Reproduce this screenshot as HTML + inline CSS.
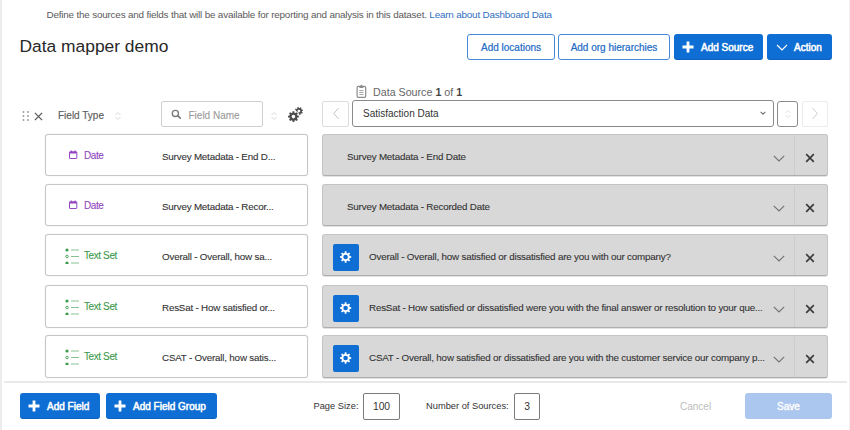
<!DOCTYPE html>
<html><head><meta charset="utf-8">
<style>
*{box-sizing:border-box;margin:0;padding:0}
html,body{width:850px;height:430px;overflow:hidden;background:#fff}
body{position:relative;font-family:"Liberation Sans",sans-serif;color:#333}
.a{position:absolute;white-space:nowrap;line-height:1}
.strip{position:absolute;top:0;bottom:0;width:2px;background:#ececec}
.btn{position:absolute;border-radius:3px}
.obtn{border:1px solid #4688d6;color:#2069c4;background:#fff;-webkit-text-stroke:0.2px #2069c4}
.sbtn{background:#0f6ed3;color:#fff;box-shadow:inset 0 -1px 0 rgba(0,40,110,0.18)}
.fcard{position:absolute;left:45px;width:263px;height:41px;border:1px solid #c6c6c6;border-radius:3px;background:#fff;box-shadow:0 0 1px #d8d8d8}
.gcard{position:absolute;left:322px;width:506px;height:41px;border:1px solid #c4c4c4;border-bottom-color:#adadad;border-radius:3px;background:#d8d8d8;box-shadow:0 1px 0 #e2e2e2}
.div{position:absolute;left:471px;top:0;bottom:0;width:1px;background:#cccccc}
.in{position:absolute;left:0;top:1px;right:0;bottom:0}
.t9{font-size:9.8px;letter-spacing:-0.19px;-webkit-text-stroke:0.1px currentColor}
</style></head><body>
<div class="strip" style="left:0"></div>
<div class="strip" style="right:0;width:1.5px;background:#f2f2f2"></div>

<!-- subtitle -->
<div class="a" style="left:46.5px;top:10px;font-size:9.9px;letter-spacing:-0.19px;color:#5a5a5a">Define the sources and fields that will be available for reporting and analysis in this dataset. <span style="color:#2f6fbf">Learn about Dashboard Data</span></div>
<!-- title -->
<div class="a" style="left:19.5px;top:38px;font-size:17.4px;color:#282828">Data mapper demo</div>

<!-- top buttons -->
<div class="btn obtn" style="left:467px;top:34px;width:88px;height:26px"><div class="a" style="left:0;right:0;top:8px;text-align:center;font-size:10px">Add locations</div></div>
<div class="btn obtn" style="left:558px;top:34px;width:112px;height:26px"><div class="a" style="left:0;right:0;top:8px;text-align:center;font-size:10px">Add org hierarchies</div></div>
<div class="btn sbtn" style="left:674px;top:34px;width:89px;height:26px">
  <svg class="a" style="left:8px;top:7px" width="12" height="12" viewBox="0 0 12 12"><path d="M6 0.5V11.5M0.5 6H11.5" stroke="#fff" stroke-width="2.8"/></svg>
  <div class="a" style="left:27px;top:9px;font-size:10px;-webkit-text-stroke:0.5px #fff">Add Source</div>
</div>
<div class="btn sbtn" style="left:767px;top:34px;width:65px;height:26px">
  <svg class="a" style="left:9px;top:10px" width="12" height="7" viewBox="0 0 12 7"><path d="M1 1L6 6L11 1" stroke="#fff" stroke-width="1.2" fill="none"/></svg>
  <div class="a" style="left:27px;top:9px;font-size:10px;-webkit-text-stroke:0.5px #fff">Action</div>
</div>

<!-- data source label -->
<svg class="a" style="left:356px;top:84px" width="11" height="14" viewBox="0 0 11 14"><rect x="1.1" y="2.4" width="8.6" height="11" rx="1.3" fill="none" stroke="#8c8c8c" stroke-width="1.2"/><circle cx="5.4" cy="1.7" r="1" fill="#8c8c8c"/><path d="M3.2 2H7.6V3.2Q7.6 4 6.8 4H4Q3.2 4 3.2 3.2Z" fill="#8c8c8c"/><path d="M3.3 6.6H7.5M3.3 8.5H7.5M3.3 10.5H7.5" stroke="#9a9a9a" stroke-width="0.9"/></svg>
<div class="a" style="left:373px;top:87px;font-size:10.7px;color:#666">Data Source <b style="color:#444">1</b> of <b style="color:#444">1</b></div>

<!-- header row -->
<svg class="a" style="left:21px;top:110px" width="9" height="12" viewBox="0 0 9 12"><g fill="#999"><circle cx="2.5" cy="2" r="0.9"/><circle cx="2.5" cy="6" r="0.9"/><circle cx="2.5" cy="10" r="0.9"/><circle cx="7" cy="2" r="0.9"/><circle cx="7" cy="6" r="0.9"/><circle cx="7" cy="10" r="0.9"/></g></svg>
<svg class="a" style="left:34px;top:112px" width="9" height="9" viewBox="0 0 9 9"><path d="M0.9 0.9L8.1 8.1M8.1 0.9L0.9 8.1" stroke="#5a5a5a" stroke-width="1.3"/></svg>
<div class="a" style="left:58px;top:111px;font-size:10px;color:#5c5c5c;-webkit-text-stroke:0.15px #5c5c5c">Field Type</div>
<svg class="a" style="left:114px;top:111px" width="8" height="10" viewBox="0 0 8 10"><path d="M1.5 4L4 1.5L6.5 4M1.5 6L4 8.5L6.5 6" stroke="#d4d4d4" stroke-width="0.9" fill="none"/></svg>
<div class="a" style="left:161px;top:101px;width:102px;height:26px;border:1px solid #d0d0d0;border-radius:2px"></div>
<svg class="a" style="left:171px;top:109px" width="11" height="11" viewBox="0 0 11 11"><circle cx="4.4" cy="4.4" r="3.1" fill="none" stroke="#7a7a7a" stroke-width="1.35"/><path d="M6.7 6.7L9.8 9.6" stroke="#7a7a7a" stroke-width="1.7"/></svg>
<div class="a" style="left:188.5px;top:111px;font-size:10px;color:#9a9a9a;-webkit-text-stroke:0.1px #9a9a9a">Field Name</div>
<svg class="a" style="left:270px;top:111px" width="8" height="10" viewBox="0 0 8 10"><path d="M1.5 4L4 1.5L6.5 4M1.5 6L4 8.5L6.5 6" stroke="#d4d4d4" stroke-width="0.9" fill="none"/></svg>
<svg class="a" style="left:287px;top:106px" width="17" height="17" viewBox="0 0 17 17"><defs><mask id="gm"><rect width="17" height="17" fill="#fff"/><circle cx="6.45" cy="10.6" r="6.2" fill="#000"/></mask></defs><path fill="#4d4d4d" fill-rule="evenodd" d="M5.43 6.63 L5.55 5.17 L7.35 5.17 L7.47 6.63 L8.54 7.07 L9.65 6.13 L10.92 7.40 L9.98 8.51 L10.42 9.58 L11.88 9.70 L11.88 11.50 L10.42 11.62 L9.98 12.69 L10.92 13.80 L9.65 15.07 L8.54 14.13 L7.47 14.57 L7.35 16.03 L5.55 16.03 L5.43 14.57 L4.36 14.13 L3.25 15.07 L1.98 13.80 L2.92 12.69 L2.48 11.62 L1.02 11.50 L1.02 9.70 L2.48 9.58 L2.92 8.51 L1.98 7.40 L3.25 6.13 L4.36 7.07ZM8.25 10.60A1.8 1.8 0 1 0 4.65 10.60A1.8 1.8 0 1 0 8.25 10.60Z"/><path fill="#4d4d4d" fill-rule="evenodd" mask="url(#gm)" d="M14.62 3.61 L15.74 3.41 L16.08 4.74 L15.00 5.10 L14.88 5.97 L15.82 6.62 L15.11 7.81 L14.09 7.29 L13.39 7.82 L13.59 8.94 L12.26 9.28 L11.90 8.20 L11.03 8.08 L10.38 9.02 L9.19 8.31 L9.71 7.29 L9.18 6.59 L8.06 6.79 L7.72 5.46 L8.80 5.10 L8.92 4.23 L7.98 3.58 L8.69 2.39 L9.71 2.91 L10.41 2.38 L10.21 1.26 L11.54 0.92 L11.90 2.00 L12.77 2.12 L13.42 1.18 L14.61 1.89 L14.09 2.91ZM13.30 5.10A1.4 1.4 0 1 0 10.50 5.10A1.4 1.4 0 1 0 13.30 5.10Z"/></svg>

<!-- source selector -->
<div class="a" style="left:322px;top:101px;width:27px;height:26px;border:1px solid #dcdcdc;border-radius:2px"></div>
<svg class="a" style="left:332px;top:107px" width="8" height="13" viewBox="0 0 8 13"><path d="M6.5 1.2L1.8 6.5L6.5 11.8" stroke="#c4c4c4" stroke-width="1" fill="none"/></svg>
<div class="a" style="left:352px;top:100px;width:422px;height:27px;border:1px solid #8a8a8a;border-radius:3px"></div>
<div class="a" style="left:363px;top:109px;font-size:10px;color:#333">Satisfaction Data</div>
<svg class="a" style="left:758.5px;top:110px" width="8" height="6" viewBox="0 0 8 6"><path d="M1.6 1.8L4 4.2L6.4 1.8" stroke="#707070" stroke-width="1.05" fill="none"/></svg>
<div class="a" style="left:777px;top:101px;width:21px;height:26px;border:1px solid #8c8c8c;border-radius:3px"></div>
<svg class="a" style="left:784px;top:109px" width="8" height="10" viewBox="0 0 8 10"><path d="M1.5 4L4 1.5L6.5 4M1.5 6L4 8.5L6.5 6" stroke="#ddd" stroke-width="0.9" fill="none"/></svg>
<div class="a" style="left:802px;top:101px;width:26px;height:26px;border:1px solid #ececec;border-radius:2px"></div>
<svg class="a" style="left:811px;top:107px" width="8" height="13" viewBox="0 0 8 13"><path d="M1.5 1L6.5 6.5L1.5 12" stroke="#ccc" stroke-width="1" fill="none"/></svg>

<!-- rows -->
<div class="fcard" style="top:134px;height:42px;"><div class="in"><svg class="a" style="left:23px;top:14px" width="9" height="9" viewBox="0 0 9 9"><rect x="0.5" y="1.8" width="7.3" height="6.7" rx="0.5" fill="none" stroke="#9247c0" stroke-width="1"/><rect x="0.5" y="1.8" width="7.3" height="1.7" fill="#9247c0"/><path d="M2.3 0.4V2.2M6 0.4V2.2" stroke="#9247c0" stroke-width="1"/></svg><div class="a t9" style="left:38px;top:14.5px;font-size:10px;letter-spacing:-0.4px;color:#9247c0">Date</div><div class="a t9" style="left:116px;top:16px;color:#333">Survey Metadata - End D...</div></div></div>
<div class="gcard" style="top:134px;height:42px;"><div class="in"><div class="a t9" style="left:24px;top:16px;color:#333">Survey Metadata - End Date</div><svg class="a" style="left:450px;top:19px" width="12" height="7" viewBox="0 0 12 7"><path d="M0.8 0.8L6 6L11.2 0.8" stroke="#727272" stroke-width="1.15" fill="none"/></svg><div class="div"></div><svg class="a" style="left:482px;top:17px" width="10" height="10" viewBox="0 0 10 10"><path d="M1.2 1.2L8.8 8.8M8.8 1.2L1.2 8.8" stroke="#3a3a3a" stroke-width="1.65"/></svg></div></div>
<div class="fcard" style="top:184px;height:42px;"><div class="in"><svg class="a" style="left:23px;top:14px" width="9" height="9" viewBox="0 0 9 9"><rect x="0.5" y="1.8" width="7.3" height="6.7" rx="0.5" fill="none" stroke="#9247c0" stroke-width="1"/><rect x="0.5" y="1.8" width="7.3" height="1.7" fill="#9247c0"/><path d="M2.3 0.4V2.2M6 0.4V2.2" stroke="#9247c0" stroke-width="1"/></svg><div class="a t9" style="left:38px;top:14.5px;font-size:10px;letter-spacing:-0.4px;color:#9247c0">Date</div><div class="a t9" style="left:116px;top:16px;color:#333">Survey Metadata - Recor...</div></div></div>
<div class="gcard" style="top:184px;height:42px;"><div class="in"><div class="a t9" style="left:24px;top:16px;color:#333">Survey Metadata - Recorded Date</div><svg class="a" style="left:450px;top:19px" width="12" height="7" viewBox="0 0 12 7"><path d="M0.8 0.8L6 6L11.2 0.8" stroke="#727272" stroke-width="1.15" fill="none"/></svg><div class="div"></div><svg class="a" style="left:482px;top:17px" width="10" height="10" viewBox="0 0 10 10"><path d="M1.2 1.2L8.8 8.8M8.8 1.2L1.2 8.8" stroke="#3a3a3a" stroke-width="1.65"/></svg></div></div>
<div class="fcard" style="top:234px;height:42px;"><div class="in"><svg class="a" style="left:18px;top:12px" width="16" height="16" viewBox="0 0 16 16"><circle cx="3" cy="2" r="1.6" fill="#3c9a4c"/><circle cx="3" cy="8.5" r="1.25" fill="none" stroke="#3c9a4c" stroke-width="0.9"/><circle cx="3" cy="15" r="1.6" fill="#3c9a4c"/><path d="M7 2H15M7 8.5H15M7 15H15" stroke="#72b57f" stroke-width="0.85"/></svg><div class="a t9" style="left:38px;top:14.5px;font-size:10px;letter-spacing:-0.4px;color:#3c9a4c">Text Set</div><div class="a t9" style="left:116px;top:16px;color:#333">Overall - Overall, how sa...</div></div></div>
<div class="gcard" style="top:234px;height:42px;"><div class="in"><div class="a" style="left:10px;top:8px;width:26px;height:27px;background:#0f6ed3;border-radius:2px"><svg class="a" style="left:7px;top:7px" width="12" height="12" viewBox="0 0 12 12"><path fill="#fff" fill-rule="evenodd" d="M4.62 1.92 L4.80 0.36 L6.40 0.36 L6.58 1.92 L7.79 2.42 L9.02 1.44 L10.16 2.58 L9.18 3.81 L9.68 5.02 L11.24 5.20 L11.24 6.80 L9.68 6.98 L9.18 8.19 L10.16 9.42 L9.02 10.56 L7.79 9.58 L6.58 10.08 L6.40 11.64 L4.80 11.64 L4.62 10.08 L3.41 9.58 L2.18 10.56 L1.04 9.42 L2.02 8.19 L1.52 6.98 L-0.04 6.80 L-0.04 5.20 L1.52 5.02 L2.02 3.81 L1.04 2.58 L2.18 1.44 L3.41 2.42ZM7.90 6.00A2.3 2.3 0 1 0 3.30 6.00A2.3 2.3 0 1 0 7.90 6.00Z"/></svg></div><div class="a t9" style="left:46px;top:16px;color:#333">Overall - Overall, how satisfied or dissatisfied are you with our company?</div><svg class="a" style="left:450px;top:19px" width="12" height="7" viewBox="0 0 12 7"><path d="M0.8 0.8L6 6L11.2 0.8" stroke="#727272" stroke-width="1.15" fill="none"/></svg><div class="div"></div><svg class="a" style="left:482px;top:17px" width="10" height="10" viewBox="0 0 10 10"><path d="M1.2 1.2L8.8 8.8M8.8 1.2L1.2 8.8" stroke="#3a3a3a" stroke-width="1.65"/></svg></div></div>
<div class="fcard" style="top:285px;height:43px;"><div class="in"><svg class="a" style="left:18px;top:12px" width="16" height="16" viewBox="0 0 16 16"><circle cx="3" cy="2" r="1.6" fill="#3c9a4c"/><circle cx="3" cy="8.5" r="1.25" fill="none" stroke="#3c9a4c" stroke-width="0.9"/><circle cx="3" cy="15" r="1.6" fill="#3c9a4c"/><path d="M7 2H15M7 8.5H15M7 15H15" stroke="#72b57f" stroke-width="0.85"/></svg><div class="a t9" style="left:38px;top:14.5px;font-size:10px;letter-spacing:-0.4px;color:#3c9a4c">Text Set</div><div class="a t9" style="left:116px;top:16px;color:#333">ResSat - How satisfied or...</div></div></div>
<div class="gcard" style="top:285px;height:43px;"><div class="in"><div class="a" style="left:10px;top:8px;width:26px;height:27px;background:#0f6ed3;border-radius:2px"><svg class="a" style="left:7px;top:7px" width="12" height="12" viewBox="0 0 12 12"><path fill="#fff" fill-rule="evenodd" d="M4.62 1.92 L4.80 0.36 L6.40 0.36 L6.58 1.92 L7.79 2.42 L9.02 1.44 L10.16 2.58 L9.18 3.81 L9.68 5.02 L11.24 5.20 L11.24 6.80 L9.68 6.98 L9.18 8.19 L10.16 9.42 L9.02 10.56 L7.79 9.58 L6.58 10.08 L6.40 11.64 L4.80 11.64 L4.62 10.08 L3.41 9.58 L2.18 10.56 L1.04 9.42 L2.02 8.19 L1.52 6.98 L-0.04 6.80 L-0.04 5.20 L1.52 5.02 L2.02 3.81 L1.04 2.58 L2.18 1.44 L3.41 2.42ZM7.90 6.00A2.3 2.3 0 1 0 3.30 6.00A2.3 2.3 0 1 0 7.90 6.00Z"/></svg></div><div class="a t9" style="left:46px;top:16px;color:#333">ResSat - How satisfied or dissatisfied were you with the final answer or resolution to your que...</div><svg class="a" style="left:450px;top:19px" width="12" height="7" viewBox="0 0 12 7"><path d="M0.8 0.8L6 6L11.2 0.8" stroke="#727272" stroke-width="1.15" fill="none"/></svg><div class="div"></div><svg class="a" style="left:482px;top:17px" width="10" height="10" viewBox="0 0 10 10"><path d="M1.2 1.2L8.8 8.8M8.8 1.2L1.2 8.8" stroke="#3a3a3a" stroke-width="1.65"/></svg></div></div>
<div class="fcard" style="top:335px;height:43px;"><div class="in"><svg class="a" style="left:18px;top:12px" width="16" height="16" viewBox="0 0 16 16"><circle cx="3" cy="2" r="1.6" fill="#3c9a4c"/><circle cx="3" cy="8.5" r="1.25" fill="none" stroke="#3c9a4c" stroke-width="0.9"/><circle cx="3" cy="15" r="1.6" fill="#3c9a4c"/><path d="M7 2H15M7 8.5H15M7 15H15" stroke="#72b57f" stroke-width="0.85"/></svg><div class="a t9" style="left:38px;top:14.5px;font-size:10px;letter-spacing:-0.4px;color:#3c9a4c">Text Set</div><div class="a t9" style="left:116px;top:16px;color:#333">CSAT - Overall, how satis...</div></div></div>
<div class="gcard" style="top:335px;height:43px;"><div class="in"><div class="a" style="left:10px;top:8px;width:26px;height:27px;background:#0f6ed3;border-radius:2px"><svg class="a" style="left:7px;top:7px" width="12" height="12" viewBox="0 0 12 12"><path fill="#fff" fill-rule="evenodd" d="M4.62 1.92 L4.80 0.36 L6.40 0.36 L6.58 1.92 L7.79 2.42 L9.02 1.44 L10.16 2.58 L9.18 3.81 L9.68 5.02 L11.24 5.20 L11.24 6.80 L9.68 6.98 L9.18 8.19 L10.16 9.42 L9.02 10.56 L7.79 9.58 L6.58 10.08 L6.40 11.64 L4.80 11.64 L4.62 10.08 L3.41 9.58 L2.18 10.56 L1.04 9.42 L2.02 8.19 L1.52 6.98 L-0.04 6.80 L-0.04 5.20 L1.52 5.02 L2.02 3.81 L1.04 2.58 L2.18 1.44 L3.41 2.42ZM7.90 6.00A2.3 2.3 0 1 0 3.30 6.00A2.3 2.3 0 1 0 7.90 6.00Z"/></svg></div><div class="a t9" style="left:46px;top:16px;color:#333">CSAT - Overall, how satisfied or dissatisfied are you with the customer service our company p...</div><svg class="a" style="left:450px;top:19px" width="12" height="7" viewBox="0 0 12 7"><path d="M0.8 0.8L6 6L11.2 0.8" stroke="#727272" stroke-width="1.15" fill="none"/></svg><div class="div"></div><svg class="a" style="left:482px;top:17px" width="10" height="10" viewBox="0 0 10 10"><path d="M1.2 1.2L8.8 8.8M8.8 1.2L1.2 8.8" stroke="#3a3a3a" stroke-width="1.65"/></svg></div></div>

<!-- bottom -->
<div class="a" style="left:4px;top:381px;width:843px;height:2px;background:#e9e9e9"></div>
<div class="btn sbtn" style="left:20px;top:393px;width:80px;height:26px">
  <svg class="a" style="left:8px;top:7px" width="12" height="12" viewBox="0 0 12 12"><path d="M6 0.5V11.5M0.5 6H11.5" stroke="#fff" stroke-width="2.8"/></svg>
  <div class="a" style="left:27px;top:9px;font-size:10px;-webkit-text-stroke:0.5px #fff">Add Field</div>
</div>
<div class="btn sbtn" style="left:106px;top:393px;width:111px;height:26px">
  <svg class="a" style="left:8px;top:7px" width="12" height="12" viewBox="0 0 12 12"><path d="M6 0.5V11.5M0.5 6H11.5" stroke="#fff" stroke-width="2.8"/></svg>
  <div class="a" style="left:27px;top:9px;font-size:10px;-webkit-text-stroke:0.5px #fff">Add Field Group</div>
</div>
<div class="a" style="left:313.5px;top:402px;font-size:9.3px;color:#333">Page Size:</div>
<div class="a" style="left:363px;top:393px;width:37px;height:27px;border:1px solid #7a7a7a;border-radius:2px;font-size:10.3px;text-align:center;line-height:26px;color:#333">100</div>
<div class="a" style="left:426px;top:402px;font-size:9.3px;color:#333">Number of Sources:</div>
<div class="a" style="left:514px;top:393px;width:26px;height:27px;border:1px solid #7a7a7a;border-radius:2px;font-size:10.3px;text-align:center;line-height:26px;color:#333">3</div>
<div class="a" style="left:680px;top:402px;font-size:10px;color:#bdbdbd">Cancel</div>
<div class="btn" style="left:745px;top:393px;width:87px;height:26px;background:#acc7ef">
  <div class="a" style="left:0;right:0;top:9px;text-align:center;font-size:10px;-webkit-text-stroke:0.35px #fff;color:#fff">Save</div>
</div>

</body></html>
